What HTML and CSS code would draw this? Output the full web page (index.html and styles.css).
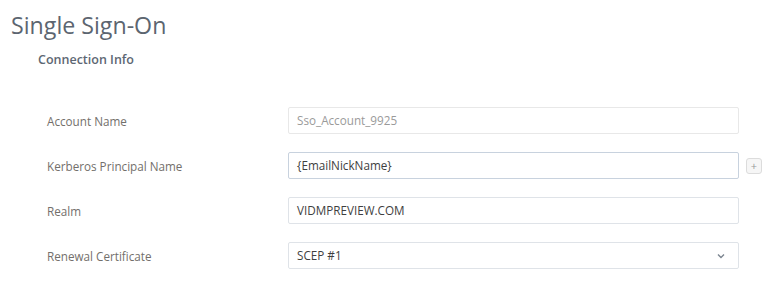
FILE: index.html
```html
<!DOCTYPE html>
<html lang="en">
<head>
  <meta charset="UTF-8">
  <title>Single Sign-On</title>
  <link rel="stylesheet" href="styles.css">
</head>
<body>
  <h1 class="title">Single Sign-On</h1>
  <div class="section">
    <h2 class="section-title">Connection Info</h2>
    <div class="form">
      <div class="row">
        <label class="label">Account Name</label>
        <div class="field disabled">Sso_Account_9925</div>
      </div>
      <div class="row">
        <label class="label">Kerberos Principal Name</label>
        <div class="field focus">{EmailNickName}</div>
        <button class="add-btn" title="Insert lookup value">+</button>
      </div>
      <div class="row">
        <label class="label">Realm</label>
        <div class="field">VIDMPREVIEW.COM</div>
      </div>
      <div class="row">
        <label class="label">Renewal Certificate</label>
        <div class="field select">
          SCEP #1
          <svg class="chev" width="8" height="6" viewBox="0 0 8 6"><path d="M1 1.5 L4 4.5 L7 1.5" fill="none" stroke="#7c8590" stroke-width="1.4"/></svg>
        </div>
      </div>
    </div>
  </div>
</body>
</html>
```

FILE: styles.css
```css
body {
  margin: 0;
  background: #fff;
  font-family: 'Open Sans', Arial, sans-serif;
}
.title {
  margin: 0;
  padding: 9px 0 0 11px;
  font-size: 23.2px;
  font-weight: 400;
  color: #5c6570;
  line-height: 32px;
}
.section {
  padding-left: 38px;
}
.section-title {
  margin: 10px 0 0;
  font-size: 12.5px;
  font-weight: 600;
  color: #5d6773;
  line-height: 18px;
}
.form {
  margin-top: 38px;
  padding-left: 9px;
  display: flex;
  flex-direction: column;
  gap: 18px;
}
.row {
  display: flex;
  align-items: center;
  height: 27px;
}
.label {
  width: 241px;
  font-size: 11.7px;
  color: #736f6b;
}
.field {
  box-sizing: border-box;
  width: 451px;
  height: 27px;
  border: 1px solid #dfe3e8;
  border-radius: 2px;
  padding: 0 8px;
  font-size: 11.7px;
  line-height: 25px;
  color: #3e3e3e;
  display: flex;
  align-items: center;
}
.field.disabled {
  border-color: #e8e8e8;
  color: #9a9a9a;
}
.field.focus {
  border-color: #c8d2de;
}
.field.select {
  justify-content: space-between;
}
.chev {
  margin-right: 5px;
}
.add-btn {
  margin-left: 7px;
  width: 16px;
  height: 16px;
  padding: 0;
  border: 1px solid #dcdcdc;
  border-radius: 3px;
  background: #f6f6f6;
  color: #999;
  font-size: 11px;
  line-height: 13px;
  font-family: 'Open Sans', Arial, sans-serif;
}
```
